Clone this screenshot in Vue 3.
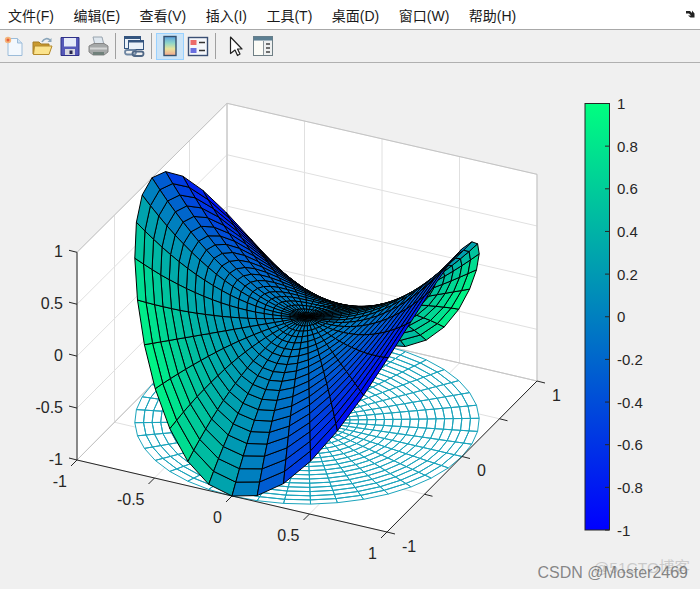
<template>
  <div class="figure">
    <!-- Menu bar -->
    <nav class="menu-bar">
      <span v-for="item in menuItems" :key="item" class="menu-item">{{ item }}</span>
      <svg class="dock-arrow" width="10" height="10" viewBox="0 0 10 10">
        <path d="M1 2 L5 2 L7 4 L7 1.5 L9.5 4.5 L9.5 8.5 L5.5 8.5 L3 6.5 L6 6.5 L4 4.5 L1 4.5 Z" fill="#222" />
      </svg>
    </nav>

    <!-- Toolbar -->
    <div class="tool-bar">
      <button class="tool-btn">
        <svg width="22" height="22" viewBox="0 0 22 22">
          <path d="M5 3.5 H14.5 L19 8 V20.5 H5 Z" fill="#f3f8fd" stroke="#9cbcd9" />
          <path d="M14.5 3.5 V8 H19" fill="#d3e4f4" stroke="#9cbcd9" />
          <circle cx="5" cy="5" r="3.2" fill="#f4b47a" />
          <circle cx="5" cy="5" r="1.5" fill="#e8603a" />
        </svg>
      </button>
      <button class="tool-btn">
        <svg width="22" height="22" viewBox="0 0 22 22">
          <path d="M2 7 H8 L10 9 H18 V19 H2 Z" fill="#c9992f" stroke="#a47d26" />
          <path d="M3.5 11 H21 L18 19.5 H2.5 Z" fill="#fbe38c" stroke="#b58a2a" />
          <path d="M11 7 C13 3 17 3 19 5" fill="none" stroke="#8aa5ba" stroke-width="1.6" />
          <path d="M20.5 3 V7 H16.5 Z" fill="#8aa5ba" />
        </svg>
      </button>
      <button class="tool-btn">
        <svg width="22" height="22" viewBox="0 0 22 22">
          <path d="M2 2.5 H20 V20.5 H2 Z" fill="#5558b8" stroke="#2f3187" />
          <rect x="5" y="3" width="12" height="8.5" fill="#e6eaf8" />
          <rect x="6" y="14" width="10" height="6" fill="#d8d8e0" />
          <rect x="10.5" y="15.5" width="3" height="3.5" fill="#26264f" />
        </svg>
      </button>
      <button class="tool-btn">
        <svg width="22" height="22" viewBox="0 0 22 22">
          <path d="M6 2 H15 L17 10 H8 Z" fill="#dfe7ee" stroke="#98a4ae" />
          <path d="M2 11 L7 8.5 H17 L21 11 V17 L17 20 H6 L2 17 Z" fill="#a5a8a8" stroke="#858585" />
          <path d="M3 12.5 H20 V14.5 H3 Z" fill="#d4d6d6" />
          <path d="M6 17 H17 V20 H6 Z" fill="#70807a" />
        </svg>
      </button>
      <span class="tool-sep"></span>
      <button class="tool-btn">
        <svg width="22" height="22" viewBox="0 0 22 22">
          <rect x="1.5" y="1.5" width="16" height="12" fill="#eaf1f8" stroke="#34557f" />
          <rect x="1.5" y="1.5" width="16" height="2.5" fill="#34557f" />
          <rect x="5.5" y="5.5" width="15" height="9" fill="#eaf1f8" stroke="#34557f" />
          <rect x="5.5" y="5.5" width="15" height="2" fill="#34557f" />
          <rect x="2" y="15" width="11" height="4.5" rx="2.2" fill="none" stroke="#6f87a3" stroke-width="1.8" />
          <rect x="9.5" y="16.5" width="11" height="4.5" rx="2.2" fill="none" stroke="#4f6785" stroke-width="1.8" />
        </svg>
      </button>
      <span class="tool-sep"></span>
      <button class="tool-btn active">
        <svg width="14" height="22" viewBox="0 0 14 22">
          <defs>
            <linearGradient id="barIcon" x1="0" y1="0" x2="0" y2="1">
              <stop offset="0" stop-color="#5b9fe0" />
              <stop offset="0.35" stop-color="#8fd6c8" />
              <stop offset="0.65" stop-color="#e8e39a" />
              <stop offset="1" stop-color="#f2a58f" />
            </linearGradient>
          </defs>
          <rect x="1" y="1.5" width="12" height="19" fill="url(#barIcon)" stroke="#34506e" stroke-width="1.4" />
        </svg>
      </button>
      <button class="tool-btn">
        <svg width="22" height="22" viewBox="0 0 22 22">
          <rect x="1.5" y="2.5" width="19" height="18" fill="#f4f6fa" stroke="#3a4f74" stroke-width="1.4" />
          <rect x="3.5" y="5" width="6" height="5" fill="#ec6a6a" />
          <rect x="3.5" y="13" width="6" height="5" fill="#6a6fe0" />
          <path d="M12 7.5 H18 M12 15.5 H18" stroke="#333" stroke-width="1.4" />
        </svg>
      </button>
      <span class="tool-sep wide"></span>
      <button class="tool-btn">
        <svg width="16" height="22" viewBox="0 0 16 22">
          <path d="M2.5 2 L14 14 H9.5 L12 19 L9.5 20.5 L7 15 L2.5 18.5 Z" fill="#fff" stroke="#222" stroke-width="1.2" stroke-linejoin="round" />
        </svg>
      </button>
      <button class="tool-btn shift">
        <svg width="22" height="22" viewBox="0 0 22 22">
          <rect x="1.5" y="1.5" width="19" height="19" fill="#eef0f0" stroke="#6f7f85" />
          <rect x="1.5" y="1.5" width="19" height="4" fill="#5c7f92" />
          <rect x="2" y="6" width="9" height="14" fill="#fbfbf6" />
          <path d="M11.5 6 V20" stroke="#8a9499" />
          <path d="M14 9 H18 M14 13 H18 M14 17 H18" stroke="#444" stroke-width="1.6" />
        </svg>
      </button>
    </div>

    <!-- Plot area: the axes are a projected canvas -->
    <main class="plot-area">
      <svg class="plot" width="700" height="526" viewBox="0 63 700 526">
        <!-- Panes -->
        <polygon :points="pts([[-1,-1,-1],[1,-1,-1],[1,1,-1],[-1,1,-1]])" fill="#fff" />
        <polygon :points="pts([[-1,-1,-1],[-1,1,-1],[-1,1,1],[-1,-1,1]])" fill="#fff" />
        <polygon :points="pts([[-1,1,-1],[1,1,-1],[1,1,1],[-1,1,1]])" fill="#fff" />

        <!-- Grid -->
        <line v-for="(g, i) in gridLines" :key="'g' + i" v-bind="g" stroke="#e0e0e0" stroke-width="1" />
        <line v-for="(g, i) in boxLines" :key="'b' + i" v-bind="g" stroke="#c4c4c4" stroke-width="1" />

        <!-- Floor mesh -->
        <path :d="floorPath" fill="#fff" stroke="#1ba4bc" stroke-width="1" />

        <!-- Axis lines and ticks -->
        <line v-for="(a, i) in axisLines" :key="'a' + i" v-bind="a" stroke="#262626" stroke-width="1" />

        <!-- Surface -->
        <path v-for="f in faces" :key="f.id" :d="f.d" :fill="f.fill" stroke="#000" stroke-width="1" stroke-linejoin="round" />

        <!-- Tick labels -->
        <text v-for="t in axisLabels" :key="t.key" :x="t.x" :y="t.y" :text-anchor="t.anchor" class="tick">{{ t.text }}</text>

        <!-- Colorbar -->
        <defs>
          <linearGradient id="winter" x1="0" y1="0" x2="0" y2="1">
            <stop offset="0" stop-color="#00ff80" />
            <stop offset="1" stop-color="#0000ff" />
          </linearGradient>
        </defs>
        <rect x="585" y="103.5" width="24.5" height="426.5" fill="url(#winter)" stroke="#262626" stroke-width="1" />
        <g v-for="t in barTicks" :key="t.text">
          <line x1="605" x2="609" :y1="t.y" :y2="t.y" stroke="#262626" stroke-width="1" />
          <text x="617" :y="t.y + 5.5" class="bar-tick">{{ t.text }}</text>
        </g>
      </svg>

      <div class="watermark faint">@51CTO博客</div>
      <div class="watermark">CSDN @Moster2469</div>
    </main>
  </div>
</template>

<script setup>
const menuItems = ['文件(F)', '编辑(E)', '查看(V)', '插入(I)', '工具(T)', '桌面(D)', '窗口(W)', '帮助(H)']

// Axes projection, fitted to the axes box on screen
const project = ([x, y, z]) => [
  307 + 155 * x + 75 * y,
  420.5 + 36 * x - 75.5 * y - (103.6 - 0.5 * y + 0.25 * x) * (z + 1)
]
const depth = ([x, y, z]) => 75 * x - 155 * y + 138.5 * z

const pt = (p) => project(p).map((v) => v.toFixed(1)).join(' ')
const pts = (list) => list.map((p) => project(p).join(',')).join(' ')

const seg = (a, b) => {
  const [x1, y1] = project(a)
  const [x2, y2] = project(b)
  return { x1, y1, x2, y2 }
}

const ticks = [-1, -0.5, 0, 0.5, 1]

// Grid on the floor and the two back walls
const gridLines = []
for (const t of ticks) {
  gridLines.push(seg([t, -1, -1], [t, 1, -1]))
  gridLines.push(seg([-1, t, -1], [1, t, -1]))
  gridLines.push(seg([t, 1, -1], [t, 1, 1]))
  gridLines.push(seg([-1, t, -1], [-1, t, 1]))
  gridLines.push(seg([-1, -1, t], [-1, 1, t]))
  gridLines.push(seg([-1, 1, t], [1, 1, t]))
}
const boxLines = [
  seg([-1, -1, 1], [-1, 1, 1]),
  seg([-1, 1, 1], [1, 1, 1]),
  seg([1, 1, -1], [1, 1, 1]),
  seg([-1, 1, -1], [-1, 1, 1]),
  seg([-1, 1, -1], [1, 1, -1]),
  seg([-1, -1, -1], [-1, 1, -1])
]

const axisLines = [
  seg([-1, -1, -1], [1, -1, -1]),
  seg([1, -1, -1], [1, 1, -1]),
  seg([-1, -1, -1], [-1, -1, 1])
]
for (const t of ticks) {
  const a = project([t, -1, -1])
  axisLines.push({ x1: a[0], y1: a[1], x2: a[0] - 6, y2: a[1] + 6 })
  const b = project([1, t, -1])
  axisLines.push({ x1: b[0], y1: b[1], x2: b[0] + 8, y2: b[1] + 2 })
  const c = project([-1, -1, t])
  axisLines.push({ x1: c[0], y1: c[1], x2: c[0] - 8, y2: c[1] - 2 })
}

const fmt = (t) => String(t)
const axisLabels = []
for (const t of ticks) {
  const a = project([t, -1, -1])
  axisLabels.push({ key: 'x' + t, text: fmt(t), x: a[0] - 10, y: a[1] + 26.5, anchor: 'end' })
  const c = project([-1, -1, t])
  axisLabels.push({ key: 'z' + t, text: fmt(t), x: c[0] - 14, y: c[1] + 5, anchor: 'end' })
}
for (const t of [-1, 0, 1]) {
  const b = project([1, t, -1])
  axisLabels.push({ key: 'y' + t, text: fmt(t), x: b[0] + 15, y: b[1] + 19.5, anchor: 'start' })
}

// Polar grid, same as cplxgrid(20)
const m = 20
const vertex = (i, j) => {
  const r = i / m
  const th = (Math.PI * (j - m)) / m
  return [r * Math.cos(th), r * Math.sin(th), r * r * Math.cos(2 * th), r * r * Math.sin(2 * th)]
}
const winter = (c) => {
  const t = (c + 1) / 2
  return `rgb(0,${Math.round(255 * t)},${Math.round(255 * (1 - t / 2))})`
}

let floor = ''
const faces = []
for (let i = 0; i < m; i++) {
  for (let j = 0; j < 2 * m; j++) {
    const q = [vertex(i, j), vertex(i + 1, j), vertex(i + 1, j + 1), vertex(i, j + 1)]
    floor += 'M' + q.map((v) => pt([v[0], v[1], -1])).join('L') + 'Z'
    const centre = [0, 1, 2].map((k) => q.reduce((s, v) => s + v[k], 0) / 4)
    faces.push({
      id: i + '-' + j,
      d: 'M' + q.map((v) => pt(v)).join('L') + 'Z',
      fill: winter(q[0][3]),
      order: depth(centre)
    })
  }
}
faces.sort((a, b) => a.order - b.order)
const floorPath = floor

const barTicks = [1, 0.8, 0.6, 0.4, 0.2, 0, -0.2, -0.4, -0.6, -0.8, -1].map((v) => ({
  text: fmt(v),
  y: 316.75 - v * 213.25
}))
</script>

<style>
html, body {
  margin: 0;
  background: #f0f0f0;
}
</style>

<style scoped>
.figure {
  width: 700px;
  height: 589px;
  display: flex;
  flex-direction: column;
  overflow: hidden;
  background: #f0f0f0;
  font-family: "Liberation Sans", "Noto Sans CJK SC", sans-serif;
}

.menu-bar {
  height: 29px;
  box-sizing: content-box;
  display: flex;
  align-items: center;
  gap: 19.5px;
  padding-left: 8px;
  background: #fff;
  border-bottom: 1px solid #a8a8a8;
  position: relative;
}

.menu-item {
  font-size: 14px;
  color: #1a1a1a;
  white-space: nowrap;
}

.dock-arrow {
  position: absolute;
  right: 5px;
  top: 9px;
}

.tool-bar {
  height: 32px;
  display: flex;
  align-items: center;
  background: #f0f0f0;
  border-bottom: 1px solid #b0b0b0;
}

.tool-btn {
  width: 28px;
  height: 27px;
  padding: 0;
  border: 1px solid transparent;
  background: none;
  display: flex;
  align-items: center;
  justify-content: center;
  box-sizing: border-box;
}

.tool-btn.active {
  background: #cce4f7;
  border-color: #99d1ff;
}

.tool-btn.shift {
  margin-left: -1px;
}

.tool-sep {
  width: 1px;
  height: 26px;
  margin: 0 4px 0 3px;
  background: #a0a0a0;
}

.tool-sep.wide {
  margin-right: 6px;
}

.plot-area {
  flex: 1;
  position: relative;
}

.plot {
  display: block;
}

.tick {
  font-size: 16px;
  fill: #262626;
}

.bar-tick {
  font-size: 15px;
  fill: #262626;
}

.watermark {
  position: absolute;
  right: 12px;
  bottom: 7px;
  font-size: 16px;
  color: rgba(80, 80, 80, 0.68);
  white-space: nowrap;
}

.watermark.faint {
  right: 10px;
  bottom: 12px;
  font-size: 15.5px;
  color: rgba(165, 165, 165, 0.5);
}
</style>
